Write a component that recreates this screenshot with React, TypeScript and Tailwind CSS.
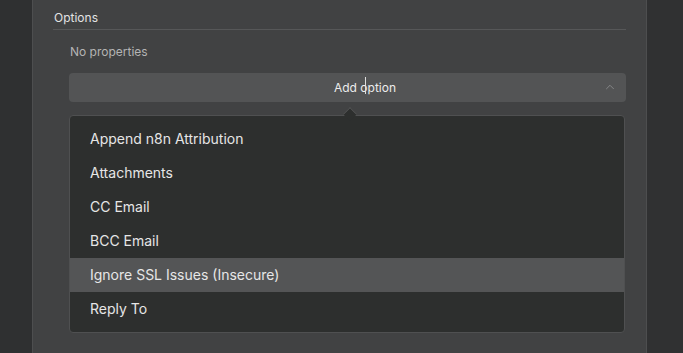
import { ChevronUp } from "lucide-react";

const options = [
  "Append n8n Attribution",
  "Attachments",
  "CC Email",
  "BCC Email",
  "Ignore SSL Issues (Insecure)",
  "Reply To",
];

export default function App() {
  return (
    <div
      className="h-[353px] w-[683px] overflow-hidden bg-[#2f3031] flex"
      style={{ fontFamily: "Inter, 'Noto Sans', sans-serif" }}
    >
      <div className="w-[32px] shrink-0" />

      {/* node parameter panel */}
      <div className="w-[615px] shrink-0 h-full bg-[#414243] border-x border-[#4d4e4f] pl-[20px] pr-[20px]">
        <div className="pt-[10px] text-[12px] leading-[16px] text-[#e3e3e3] pl-px">Options</div>
        <div className="mt-[3px] h-px bg-[#565758]" />

        <div className="pl-[16px]">
          <div className="mt-[14px] text-[12px] leading-[16px] text-[#b4b4b4] pl-px">No properties</div>

          <div className="relative mt-[13px]">
            <button className="relative w-full h-[29px] rounded-[4px] bg-[#535455] text-[12px] text-[#ececec] flex items-center justify-center pl-[35px]">
              <span className="relative">
                Add option
                <span className="absolute left-[31px] top-[-2px] w-px h-[17px] bg-[#dcdcdc]" />
              </span>
              <ChevronUp
                className="absolute right-[9px] top-[7px] text-[#8c8d8e]"
                size={14}
                strokeWidth={1.5}
              />
            </button>

            {/* popper arrow */}
            <div className="absolute left-[276px] top-[36px] w-[10px] h-[10px] rotate-45 bg-[#2d2f2e] border-l border-t border-[#525354] z-10" />

            <div className="relative mt-[13px] mr-px rounded-[4px] border border-[#4f5051] bg-[#2d2f2e] py-[6px]">
              {options.map((o, i) => (
                <div
                  key={o}
                  className={
                    "h-[34px] flex items-center pl-[20px] pb-[2px] text-[14px] text-[#e6e6e6] " +
                    (i === 4 ? "bg-[#545556]" : "")
                  }
                >
                  {o}
                </div>
              ))}
            </div>
          </div>
        </div>
      </div>

      <div className="flex-1 bg-[#303132]" />
    </div>
  );
}
